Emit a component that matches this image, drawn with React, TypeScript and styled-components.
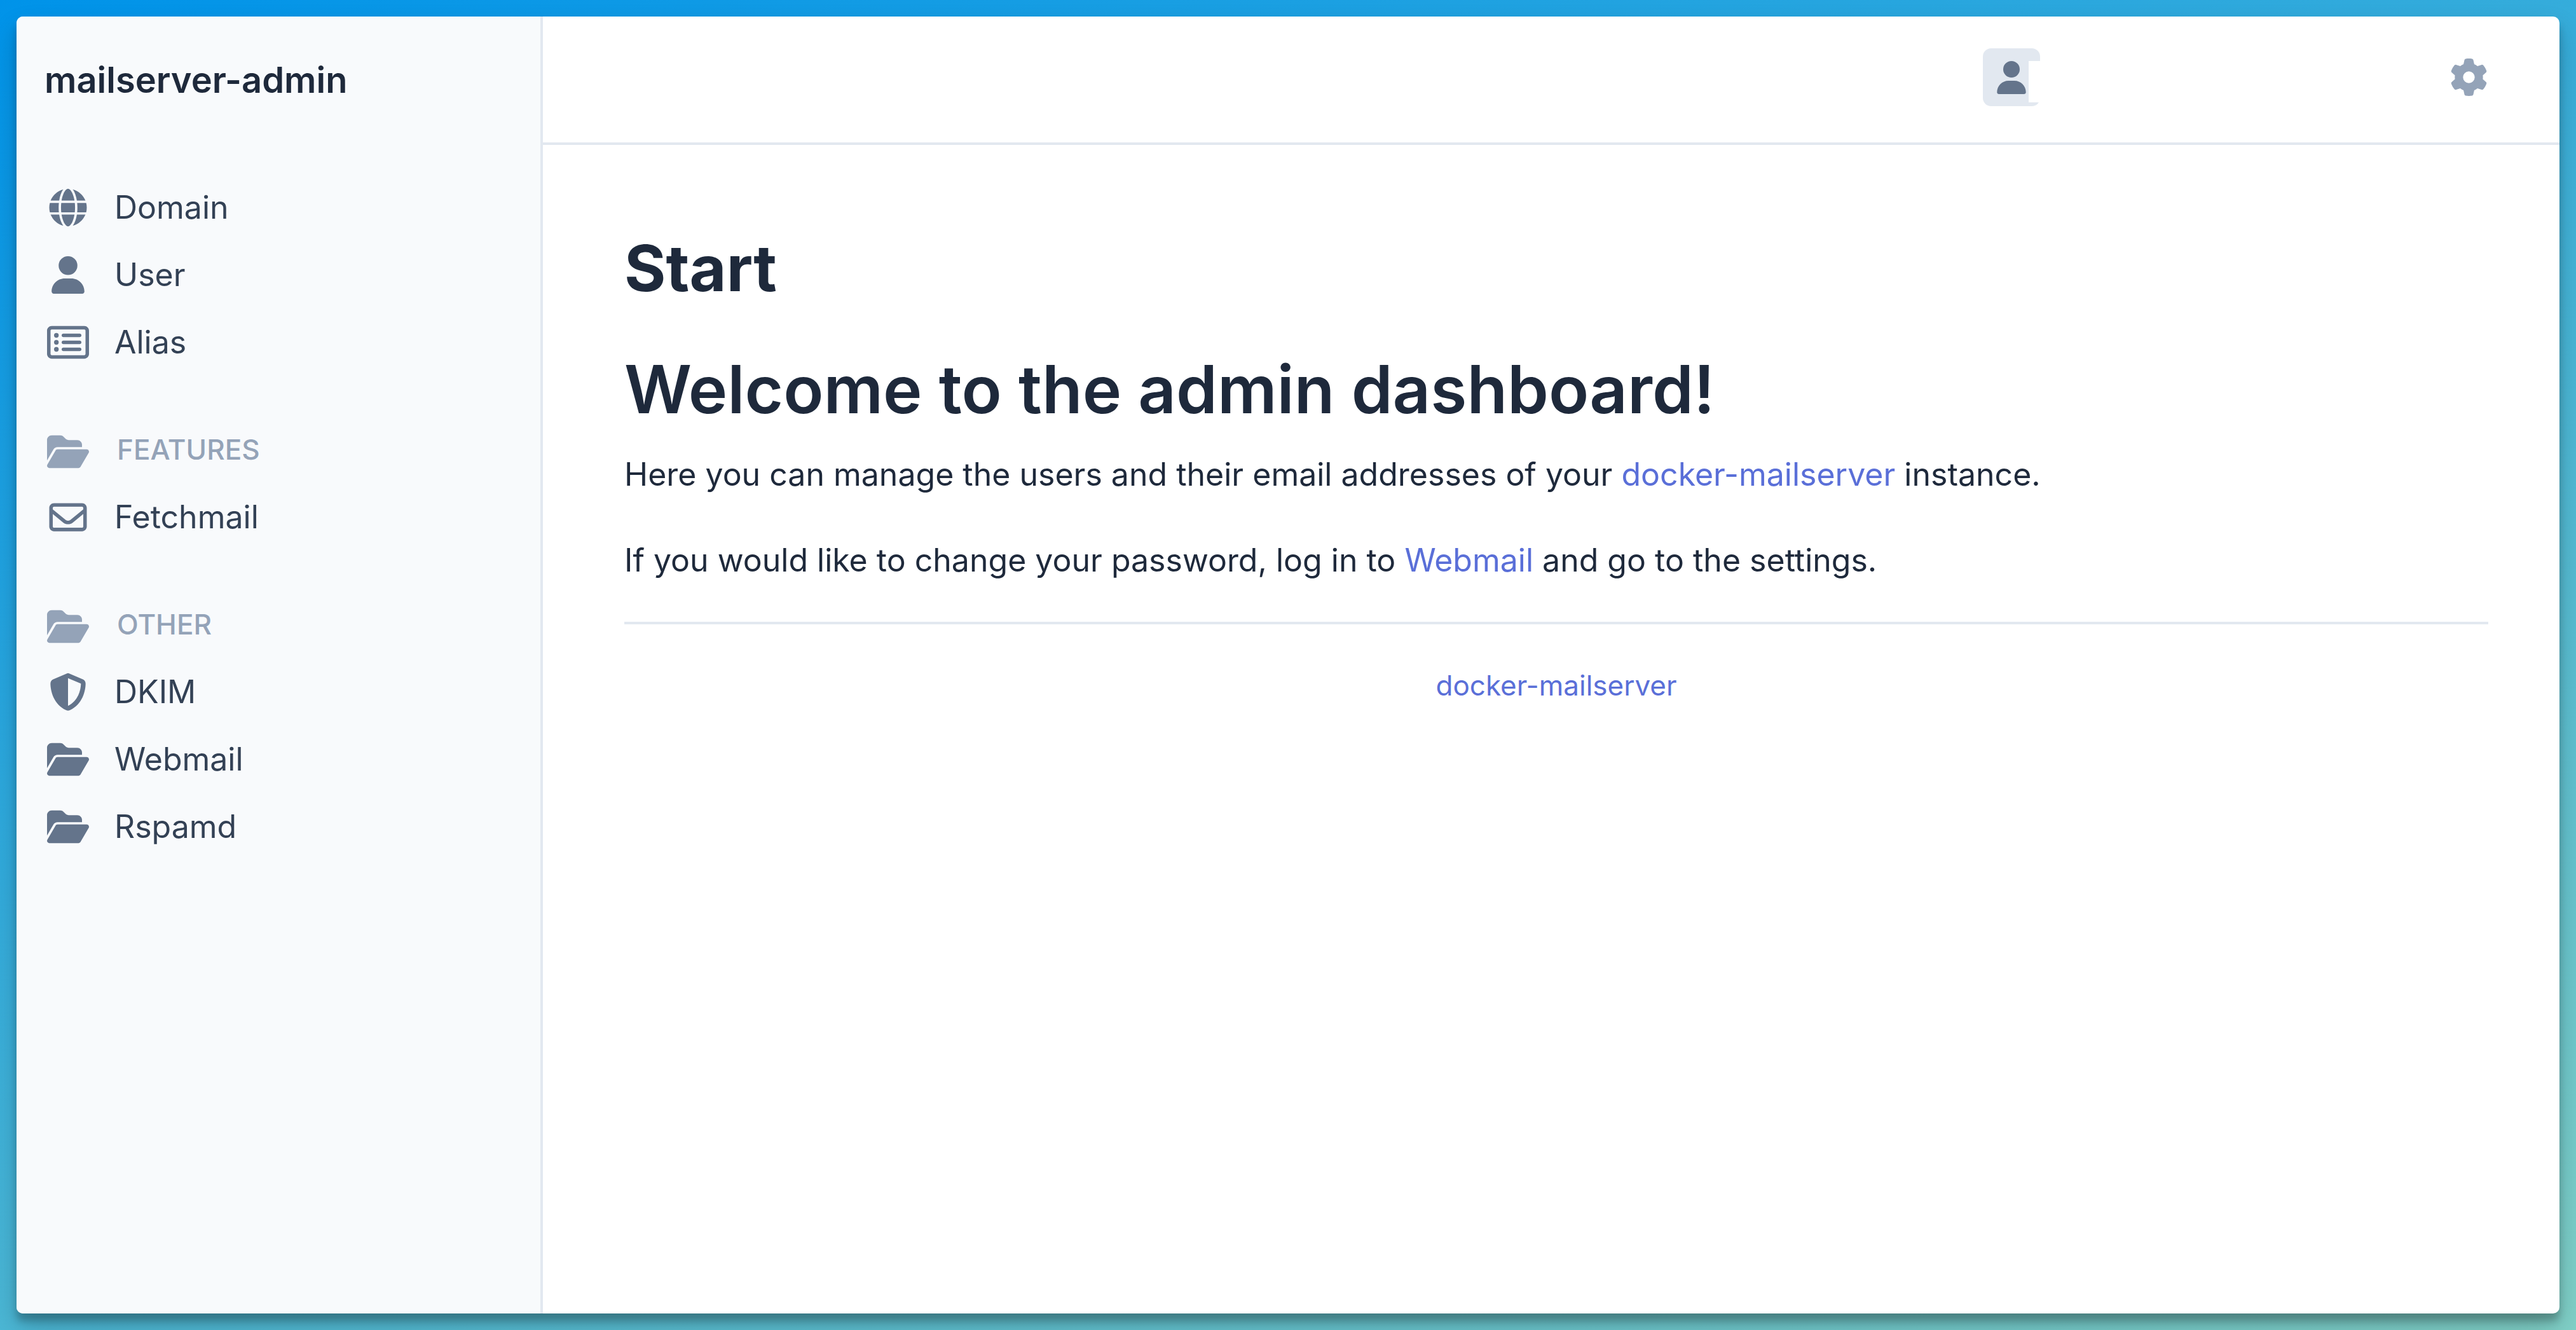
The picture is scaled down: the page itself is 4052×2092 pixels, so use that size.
import React from "react";
import styled, { createGlobalStyle } from "styled-components";
import type { IconType } from "react-icons";
import {
  FaFolderOpen,
  FaGear,
  FaGlobe,
  FaRegEnvelope,
  FaRegRectangleList,
  FaShieldHalved,
  FaUser,
} from "react-icons/fa6";

const GlobalStyle = createGlobalStyle`
  *, *::before, *::after { box-sizing: border-box; }
  body {
    margin: 0;
    font-family: Inter, "Liberation Sans", sans-serif;
    font-size: 50px;
    line-height: 68px;
    color: #1e293b;
  }
`;

const Backdrop = styled.div`
  min-height: 100vh;
  padding: 26px;
  display: flex;
  background: linear-gradient(160deg, #0093e9 0%, #80d0c7 100%);
`;

const Window = styled.div`
  flex: 1;
  display: grid;
  grid-template-columns: 828px minmax(0, 1fr);
  border-radius: 10px;
  overflow: hidden;
  background: #ffffff;
  box-shadow: 0 20px 40px rgba(0, 0, 0, 0.2), 0 12px 12px rgba(0, 0, 0, 0.22);
`;

const Sidebar = styled.aside`
  padding: 66px 44px;
  background: #f8fafc;
  border-right: 4px solid #e2e8f0;
`;

const Brand = styled.a`
  display: block;
  margin-bottom: 113px;
  font-size: 56px;
  font-weight: 600;
  color: #1e293b;
  text-decoration: none;
`;

const MenuList = styled.ul`
  margin: 0;
  padding: 0;
  list-style: none;
`;

const MenuLink = styled.a`
  display: flex;
  align-items: center;
  gap: 40px;
  height: 106px;
  padding-left: 4px;
  color: #334155;
  text-decoration: none;

  svg {
    width: 66px;
    height: 59px;
    color: #64748b;
  }
`;

const MenuHeading = styled.h2`
  display: flex;
  align-items: center;
  gap: 44px;
  height: 99px;
  margin: 70px 0 0;
  padding-left: 4px;
  font-size: 44px;
  font-weight: 500;
  text-transform: uppercase;
  color: #94a3b8;

  svg {
    width: 66px;
    height: 59px;
  }
`;

const HeadingLabel = styled.span`
  padding-bottom: 8px;
`;

const Main = styled.div`
  display: flex;
  flex-direction: column;
`;

const TopBar = styled.header`
  display: flex;
  justify-content: flex-end;
  align-items: center;
  gap: 645px;
  padding: 50px 113px 57px;
  border-bottom: 4px solid #e2e8f0;
`;

const IconButton = styled.button`
  padding: 0;
  border: 0;
  background: none;
  color: #94a3b8;

  svg {
    display: block;
    width: 59px;
    height: 59px;
  }
`;

const AvatarButton = styled.button`
  position: relative;
  display: flex;
  align-items: center;
  justify-content: center;
  width: 90px;
  height: 91px;
  padding: 0;
  border: 0;
  border-radius: 13px;
  background: #e2e8f0;
  color: #64748b;

  svg {
    width: 52px;
    height: 52px;
  }
`;

const BlankName = styled.span`
  position: absolute;
  left: 72px;
  top: 20px;
  width: 400px;
  height: 65px;
  background: #ffffff;
`;

const Content = styled.main`
  padding: 130px 112px 64px 128px;
`;

const PageTitle = styled.h1`
  margin: 0 0 62px;
  font-size: 100px;
  line-height: 128px;
  font-weight: 700;
`;

const Welcome = styled.h2`
  margin: 0 0 36px;
  font-size: 104px;
  line-height: 128px;
  font-weight: 600;
`;

const Intro = styled.section`
  display: grid;
  gap: 67px;
  padding-bottom: 63px;
`;

const Paragraph = styled.p`
  margin: 0;
`;

const TextLink = styled.a`
  color: #5a6fd8;
  text-decoration: none;
`;

const Footer = styled.footer`
  padding-top: 62px;
  border-top: 4px solid #e2e8f0;
  font-size: 44px;
  text-align: center;
`;

type Item = { label: string; icon: IconType };
type Section = { title?: string; items: Item[] };

const sections: Section[] = [
  {
    items: [
      { label: "Domain", icon: FaGlobe },
      { label: "User", icon: FaUser },
      { label: "Alias", icon: FaRegRectangleList },
    ],
  },
  { title: "Features", items: [{ label: "Fetchmail", icon: FaRegEnvelope }] },
  {
    title: "Other",
    items: [
      { label: "DKIM", icon: FaShieldHalved },
      { label: "Webmail", icon: FaFolderOpen },
      { label: "Rspamd", icon: FaFolderOpen },
    ],
  },
];

function Menu() {
  return (
    <nav>
      {sections.map((section, index) => (
        <React.Fragment key={index}>
          {section.title && (
            <MenuHeading>
              <FaFolderOpen />
              <HeadingLabel>{section.title}</HeadingLabel>
            </MenuHeading>
          )}
          <MenuList>
            {section.items.map(({ label, icon: Icon }) => (
              <li key={label}>
                <MenuLink href="#">
                  <Icon />
                  {label}
                </MenuLink>
              </li>
            ))}
          </MenuList>
        </React.Fragment>
      ))}
    </nav>
  );
}

export default function App() {
  return (
    <>
      <GlobalStyle />
      <Backdrop>
        <Window>
          <Sidebar>
            <Brand href="#">mailserver-admin</Brand>
            <Menu />
          </Sidebar>
          <Main>
            <TopBar>
              <AvatarButton aria-label="Account">
                <FaUser />
                <BlankName />
              </AvatarButton>
              <IconButton aria-label="Settings">
                <FaGear />
              </IconButton>
            </TopBar>
            <Content>
              <PageTitle>Start</PageTitle>
              <Welcome>Welcome to the admin dashboard!</Welcome>
              <Intro>
                <Paragraph>
                  Here you can manage the users and their email addresses of your{" "}
                  <TextLink href="#">docker-mailserver</TextLink> instance.
                </Paragraph>
                <Paragraph>
                  If you would like to change your password, log in to{" "}
                  <TextLink href="#">Webmail</TextLink> and go to the settings.
                </Paragraph>
              </Intro>
              <Footer>
                <TextLink href="#">docker-mailserver</TextLink>
              </Footer>
            </Content>
          </Main>
        </Window>
      </Backdrop>
    </>
  );
}
